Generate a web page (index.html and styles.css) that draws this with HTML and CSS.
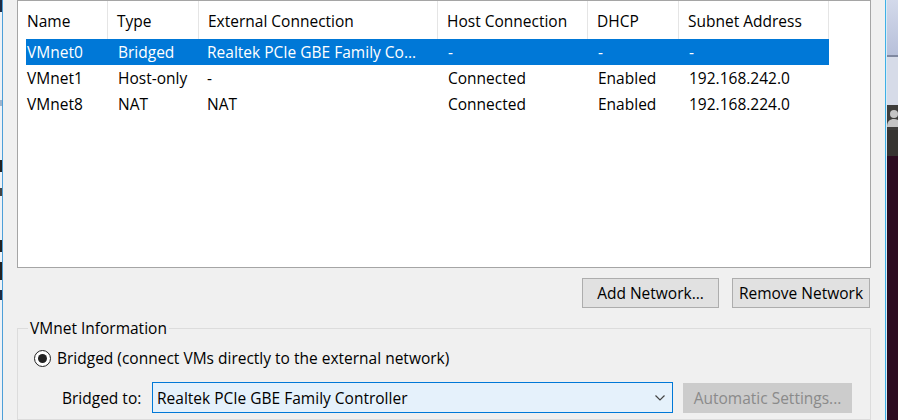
FILE: index.html
```html
<!DOCTYPE html>
<html>
<head>
<meta charset="utf-8">
<link rel="stylesheet" href="styles.css">
</head>
<body>
<div class="screen">
  <div class="edge-left"></div>
  <div class="dialog">
    <div class="list">
      <div class="list-head">
        <div class="head-cell">Name</div>
        <div class="head-cell">Type</div>
        <div class="head-cell">External Connection</div>
        <div class="head-cell">Host Connection</div>
        <div class="head-cell">DHCP</div>
        <div class="head-cell">Subnet Address</div>
      </div>
      <div class="row sel">
        <span>VMnet0</span><span>Bridged</span><span>Realtek PCIe GBE Family Co…</span><span>-</span><span>-</span><span>-</span>
      </div>
      <div class="row">
        <span>VMnet1</span><span>Host-only</span><span>-</span><span>Connected</span><span>Enabled</span><span>192.168.242.0</span>
      </div>
      <div class="row">
        <span>VMnet8</span><span>NAT</span><span>NAT</span><span>Connected</span><span>Enabled</span><span>192.168.224.0</span>
      </div>
    </div>
    <div class="actions">
      <button class="btn add">Add Network...</button>
      <button class="btn remove">Remove Network</button>
    </div>
    <fieldset class="group">
      <legend>VMnet Information</legend>
      <div class="radio-row">
        <span class="radio"><span class="dot"></span></span>
        <span>Bridged (connect VMs directly to the external network)</span>
      </div>
      <div class="bridge-row">
        <span class="bridge-label">Bridged to:</span>
        <div class="combo">
          <span>Realtek PCIe GBE Family Controller</span>
          <svg class="chev" width="10" height="6" viewBox="0 0 10 6"><polyline points="0.5,0.5 5,5 9.5,0.5" fill="none" stroke="#444" stroke-width="1.2"/></svg>
        </div>
        <button class="btn disabled">Automatic Settings...</button>
      </div>
    </fieldset>
  </div>
  <div class="win-border"></div>
  <div class="backdrop">
    <div class="bd-a"></div>
    <div class="bd-line"></div>
    <div class="bd-b"></div>
    <div class="bd-c">
      <svg width="11" height="25" viewBox="0 0 11 25"><circle cx="7" cy="9" r="4" fill="#c4c4c4"/><path d="M0 22 C0 16 3 14 7 14 C11 14 14 16 14 22 Z" fill="#c4c4c4"/></svg>
    </div>
    <div class="bd-d"></div>
    <div class="bd-e"></div>
  </div>
</div>
</body>
</html>
```
FILE: styles.css
```css
* { box-sizing: border-box; }
body {
  margin: 0;
  width: 898px;
  height: 420px;
  overflow: hidden;
  background: #f0f0f0;
  font-family: "Open Sans", "Noto Sans", sans-serif;
  font-size: 15.5px;
  color: #000;
}
.screen { display: flex; height: 420px; }
.edge-left {
  width: 3px;
  border-right: 1px solid #4d9fd8;
  background: linear-gradient(to bottom,
    #1d2c44 0 12px, #eef2f7 12px 100px, #9fb4cc 100px 106px, #eef2f7 106px 160px,
    #222 160px 172px, #eef2f7 172px 188px, #444 188px 196px, #eef2f7 196px 240px,
    #222 240px 252px, #eef2f7 252px 262px, #222 262px 280px, #eef2f7 280px 290px,
    #1d2c44 290px 300px, #eef2f7 300px);
}
.dialog {
  flex: 1;
  padding: 0 14px;
  display: flex;
  flex-direction: column;
  min-width: 0;
}
.list {
  height: 268px;
  background: #fff;
  border: 1px solid #a5a5a5;
  flex: none;
}
.list-head {
  display: grid;
  grid-template-columns: 90px 91px 239px 150px 91px 150px;
  height: 38px;
}
.head-cell {
  display: flex;
  align-items: center;
  padding: 2px 0 0 9px;
  border-right: 1px solid #e5e5e5;
  white-space: nowrap;
}
.row {
  display: grid;
  grid-template-columns: 82px 91px 239px 150px 91px 150px;
  width: 803px;
  height: 26px;
  margin-left: 8px;
  align-items: center;
}
.row span {
  padding-left: 10px;
  white-space: nowrap;
  overflow: hidden;
}
.row span:first-child { padding-left: 1px; }
.row span:nth-child(3) { padding-left: 8px; }
.row.sel { background: #0078d7; color: #fff; }
.actions {
  display: flex;
  justify-content: flex-end;
  gap: 13px;
  margin-top: 10px;
  padding-right: 1px;
}
.btn {
  font: inherit;
  color: #000;
  height: 30px;
  border: 1px solid #adadad;
  background: #e1e1e1;
  padding: 0;
  margin: 0;
}
.add { width: 137px; }
.remove { width: 138px; }
.group {
  margin: 10px 0 0 0;
  padding: 0 0 0 16px;
  border: 1px solid #dcdcdc;
  height: 140px;
  min-width: 0;
}
.group legend {
  margin-left: -6px;
  padding: 0 2px;
  line-height: 20px;
}
.radio-row {
  display: flex;
  align-items: center;
  gap: 6px;
  height: 24px;
  margin-top: 8px;
}
.radio {
  width: 17px;
  height: 17px;
  border: 1px solid #222;
  border-radius: 50%;
  display: flex;
  align-items: center;
  justify-content: center;
  background: #fff;
}
.dot {
  width: 9px;
  height: 9px;
  border-radius: 50%;
  background: #222;
}
.bridge-row {
  display: flex;
  align-items: center;
  margin-top: 12px;
  padding-left: 28px;
}
.bridge-label { width: 90px; }
.combo {
  width: 521px;
  height: 31px;
  border: 1px solid #0078d7;
  background: #e5f1fb;
  display: flex;
  align-items: center;
  justify-content: space-between;
  padding: 0 7px 0 4px;
}
.chev { display: block; }
.btn.disabled {
  margin-left: 10px;
  width: 169px;
  background: #cccccc;
  border-color: #cccccc;
  color: #8a8a8a;
}
.win-border {
  width: 2px;
  border-left: 1px solid #3fb0e6;
  background: #d8ecf7;
}
.backdrop {
  width: 11px;
  display: flex;
  flex-direction: column;
}
.bd-a { height: 55px; background: linear-gradient(to bottom, #d3d9ea, #b7c0da); }
.bd-line { height: 2px; background: #7f88a0; }
.bd-b { height: 48px; background: #d6dbe8; }
.bd-c { height: 25px; background: #3e3d3b; }
.bd-c svg { display: block; }
.bd-d { height: 26px; background: #363331; }
.bd-e { flex: 1; background: #2c0b20; }
```
